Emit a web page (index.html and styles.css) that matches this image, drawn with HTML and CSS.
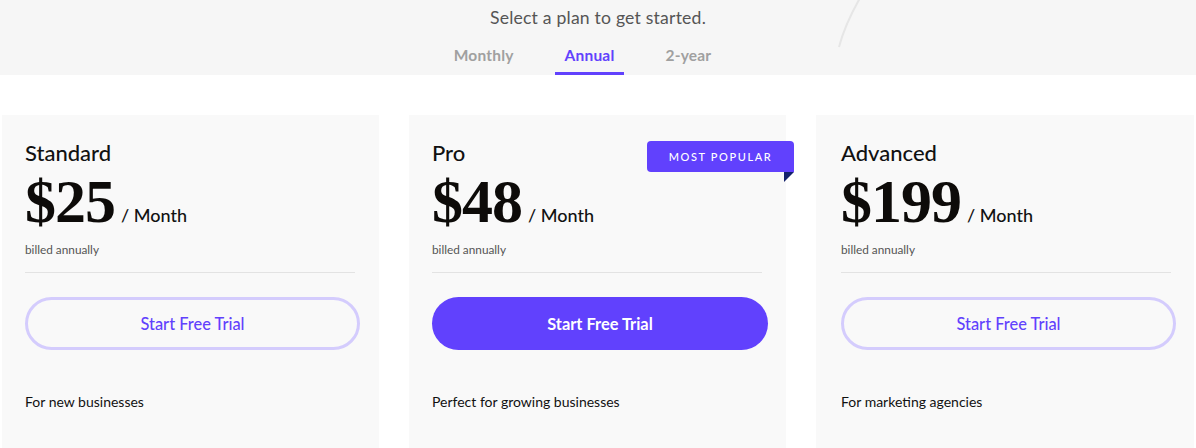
FILE: index.html
```html
<!DOCTYPE html>
<html>
<head>
<meta charset="utf-8">
<link rel="stylesheet" href="styles.css">
</head>
<body>
<header class="hero">
  <svg class="arc" width="120" height="75" viewBox="0 0 120 75"><path d="M19 47 C 24 28, 32 12, 40 -2" fill="none" stroke="#e6e6e6" stroke-width="2"/></svg>
  <p class="lead">Select a plan to get started.</p>
  <nav class="tabs">
    <span class="tab">Monthly</span>
    <span class="tab active">Annual</span>
    <span class="tab">2-year</span>
  </nav>
</header>
<main class="plans">
  <section class="card">
    <h2 class="name">Standard</h2>
    <div class="price"><span class="amount">$25</span><span class="per">/ Month</span></div>
    <p class="billed">billed annually</p>
    <hr class="rule">
    <a class="btn outline">Start Free Trial</a>
    <p class="desc">For new businesses</p>
  </section>
  <section class="card">
    <div class="badge">MOST POPULAR</div>
    <div class="fold"></div>
    <h2 class="name">Pro</h2>
    <div class="price"><span class="amount">$48</span><span class="per">/ Month</span></div>
    <p class="billed">billed annually</p>
    <hr class="rule">
    <a class="btn filled">Start Free Trial</a>
    <p class="desc">Perfect for growing businesses</p>
  </section>
  <section class="card last">
    <h2 class="name">Advanced</h2>
    <div class="price"><span class="amount">$199</span><span class="per">/ Month</span></div>
    <p class="billed">billed annually</p>
    <hr class="rule">
    <a class="btn outline">Start Free Trial</a>
    <p class="desc">For marketing agencies</p>
  </section>
</main>
</body>
</html>
```

FILE: styles.css
```css
* { box-sizing: border-box; }
html, body { margin: 0; padding: 0; background: #fff; }
body {
  width: 1196px;
  height: 448px;
  overflow: hidden;
  font-family: "Lato", "Liberation Sans", sans-serif;
  color: #111;
}
.hero {
  position: relative;
  height: 75px;
  background: #f6f6f6;
  display: flex;
  flex-direction: column;
  align-items: center;
  padding-top: 7px;
}
.arc { position: absolute; left: 820px; top: 0; }
.lead {
  margin: 0;
  font-size: 17.6px;
  line-height: 22px;
  color: #555;
  letter-spacing: 0.2px;
}
.tabs {
  display: flex;
  gap: 31px;
  margin-top: 13px;
  margin-right: 31px;
}
.tab {
  padding: 0 10px;
  height: 33px;
  line-height: 26px;
  font-size: 15.5px;
  font-weight: 700;
  color: #a0a0a0;
  border-bottom: 3px solid transparent;
  letter-spacing: 0.2px;
}
.tab.active {
  color: #6141fd;
  border-bottom-color: #6141fd;
}
.plans {
  display: flex;
  justify-content: flex-start;
  gap: 30px;
  margin-top: 40px;
  padding-left: 2px;
}
.card {
  position: relative;
  width: 377px;
  height: 340px;
  background: #f9f9f9;
  padding: 26px 19px 0 23px;
}
.card.last { width: 378px; padding-left: 25px; padding-right: 18px; }
.name {
  margin: 0;
  font-size: 22px;
  line-height: 24px;
  font-weight: 500;
  color: #111;
}
.price {
  display: flex;
  align-items: baseline;
  margin-top: 5px;
  height: 62px;
}
.amount {
  font-family: "Liberation Serif", "Times New Roman", serif;
  font-weight: 700;
  font-size: 62px;
  line-height: 62px;
  letter-spacing: -1px;
  color: #0d0b09;
}
.per {
  margin-left: 6px;
  font-size: 18px;
  font-weight: 500;
  color: #111;
}
.billed {
  margin: 11px 0 0;
  font-size: 11.8px;
  line-height: 14px;
  color: #555;
}
.rule {
  margin: 15px 5px 0 0;
  border: 0;
  border-top: 1px solid #e3e3e3;
  height: 0;
}
.btn {
  display: flex;
  align-items: center;
  justify-content: center;
  margin-top: 24px;
  height: 53px;
  border-radius: 27px;
  font-size: 16.4px;
  font-weight: 500;
}
.btn.outline {
  border: 3px solid #d4ccfd;
  color: #6141fd;
}
.btn.filled {
  background: #6141fd;
  color: #fff;
  font-weight: 700;
  margin-right: -1px;
}
.desc {
  margin: 42px 0 0;
  font-size: 14px;
  line-height: 20px;
  color: #111;
}
.badge {
  position: absolute;
  top: 26px;
  right: -8px;
  width: 147px;
  height: 31px;
  background: #6141fd;
  color: #fff;
  border-radius: 4px 4px 0 4px;
  font-size: 11px;
  font-weight: 500;
  letter-spacing: 1.6px;
  display: flex;
  align-items: center;
  justify-content: center;
}
.fold {
  position: absolute;
  top: 57px;
  right: -8px;
  width: 10px;
  height: 10px;
  background: #13216b;
  clip-path: polygon(0 0, 100% 0, 0 100%);
}
```
